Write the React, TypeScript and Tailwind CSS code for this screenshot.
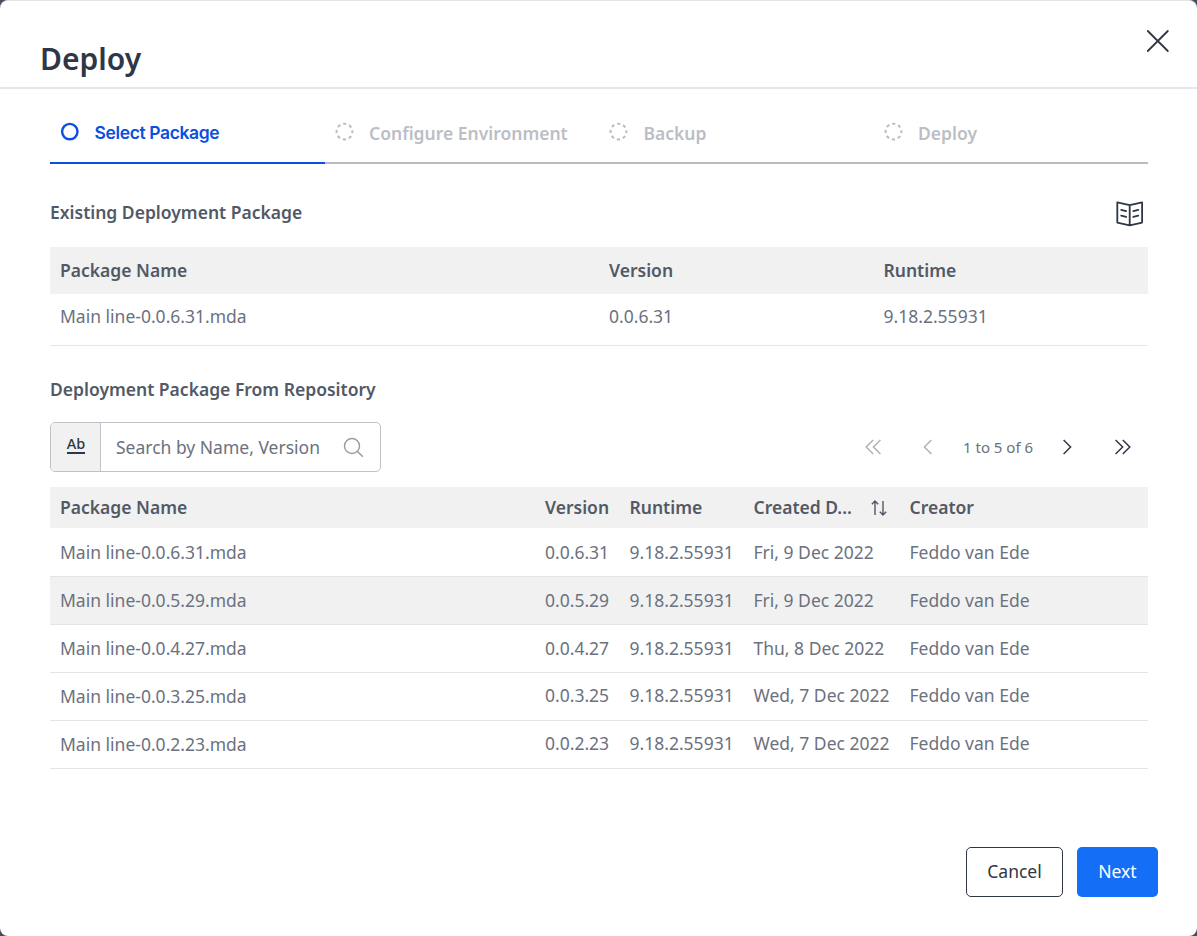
const packages = [
  ["Main line-0.0.6.31.mda", "0.0.6.31", "9.18.2.55931", "Fri, 9 Dec 2022"],
  ["Main line-0.0.5.29.mda", "0.0.5.29", "9.18.2.55931", "Fri, 9 Dec 2022"],
  ["Main line-0.0.4.27.mda", "0.0.4.27", "9.18.2.55931", "Thu, 8 Dec 2022"],
  ["Main line-0.0.3.25.mda", "0.0.3.25", "9.18.2.55931", "Wed, 7 Dec 2022"],
  ["Main line-0.0.2.23.mda", "0.0.2.23", "9.18.2.55931", "Wed, 7 Dec 2022"],
];

const columns = "grid grid-cols-[495px_84.5px_124px_156px_1fr]";

function Step({ label }: { label: string }) {
  return (
    <div className="flex h-[75px] border-b-2 border-[#b7bcc2] pl-2.5 pt-[33px] text-[#bbbec4]">
      <svg className="h-5 w-5 shrink-0" viewBox="0 0 20 20" fill="none" stroke="currentColor">
        <circle cx="9.5" cy="9.6" r="7.9" strokeWidth="2.1" strokeDasharray="3.2 3.005" strokeDashoffset="1.6" />
      </svg>
      <span className="ml-[14.5px] mt-[-1px] text-[17.5px] leading-6 font-semibold whitespace-nowrap">{label}</span>
    </div>
  );
}

function Chevrons({ double, right }: { double?: boolean; right?: boolean }) {
  return (
    <svg
      className={right ? "h-5 w-5 text-[#2f3646]" : "h-5 w-5 rotate-180 text-[#aeb2b9]"}
      viewBox="0 0 20 20"
      fill="none"
      stroke="currentColor"
      strokeWidth="1.5"
    >
      {double ? <path d="M2.6 3l7 7-7 7M9.8 3l7 7-7 7" /> : <path d="M6.6 3l7 7-7 7" />}
    </svg>
  );
}

export default function App() {
  return (
    <div className="h-[936px] w-[1197px] overflow-hidden bg-[#454c5b] font-['Noto_Sans',sans-serif] text-[17.5px] text-[#6c717e]">
      <div className="flex h-full flex-col rounded-[8px] border-t border-[#e3e4e6] bg-white">
        <header className="flex h-[88px] shrink-0 justify-between border-b-2 border-[#e7e7e9] pl-10 pr-[27px]">
          <h1 className="mt-[37px] text-[30px] leading-[42px] font-semibold text-[#2f3646]">Deploy</h1>
          <svg className="mt-[28px] h-6 w-6" viewBox="0 0 24 24" fill="none" stroke="#2f3646" strokeWidth="1.8" strokeLinecap="round">
            <path d="M1.8 2l20 20M21.8 2l-20 20" />
          </svg>
        </header>

        <main className="flex flex-1 flex-col pl-[50px] pr-[49px]">
          <nav className="grid grid-cols-4">
            <div className="flex h-[75px] border-b-2 border-[#0a4fe0] pl-2.5 pt-[33px] text-[#0a4fe0]">
              <svg className="h-5 w-5 shrink-0" viewBox="0 0 20 20" fill="none" stroke="currentColor">
                <circle cx="9.8" cy="9.6" r="7.7" strokeWidth="2.4" />
              </svg>
              <span className="ml-[14.5px] mt-[-1px] font-['Inter',sans-serif] text-[17.5px] leading-6 font-semibold tracking-[-0.38px] whitespace-nowrap">
                Select Package
              </span>
            </div>
            <Step label="Configure Environment" />
            <Step label="Backup" />
            <Step label="Deploy" />
          </nav>

          <section>
            <div className="flex h-[83px] justify-between pr-1">
              <h2 className="mt-[36px] leading-6 font-semibold text-[#525966]">Existing Deployment Package</h2>
              <svg className="mt-[36px] h-7 w-7" viewBox="0 0 28 28" fill="none" stroke="#2f3646" strokeWidth="1.8" strokeLinejoin="round" strokeLinecap="round">
                <path d="M13.7 5.2L1.3 2.3v20.3l12.4 2.7 12.4-2.7V2.3L13.7 5.2zM13.7 5.2v20.1" />
                <path d="M5.2 9.8l5 1.3M5.2 15.6l5 1.3M17.3 11.1l5-1.3M17.3 16.9l5-1.3" />
              </svg>
            </div>
            <div className="grid h-[47px] grid-cols-[2fr_1fr_1fr] items-center bg-[#f1f1f1] font-semibold text-[#525966]">
              <span className="pl-2.5">Package Name</span>
              <span className="pl-2.5">Version</span>
              <span className="pl-2.5">Runtime</span>
            </div>
            <div className="grid h-[52px] grid-cols-[2fr_1fr_1fr] items-center border-b border-[#e7e7e9] pb-[7px]">
              <span className="pl-2.5">Main line-0.0.6.31.mda</span>
              <span className="pl-2.5">0.0.6.31</span>
              <span className="pl-2.5">9.18.2.55931</span>
            </div>
          </section>

          <section>
            <h2 className="mt-[31px] leading-6 font-semibold text-[#525966]">Deployment Package From Repository</h2>
            <div className="mt-[21px] flex h-[50px] items-center justify-between pr-[19px]">
              <div className="flex h-[50px] w-[331px] overflow-hidden rounded-[5px] border border-[#bfc2c8]">
                <div className="flex w-[50px] justify-center border-r border-[#bfc2c8] bg-[#f1f1f1] pl-px">
                  <span className="mt-[11px] h-[20px] border-b-2 border-[#2f3646] text-[14.5px] leading-[19px] font-medium text-[#2f3646]">Ab</span>
                </div>
                <div className="flex flex-1 items-center justify-between pl-[15px] pr-4">
                  <span className="whitespace-nowrap">Search by Name, Version</span>
                  <svg className="h-[21px] w-[21px]" viewBox="0 0 21 21" fill="none" stroke="#9a9ea7" strokeWidth="1.5">
                    <circle cx="9" cy="9" r="7.5" />
                    <path d="M14.4 14.4l5.4 5.4" />
                  </svg>
                </div>
              </div>
              <div className="flex items-center">
                <Chevrons double />
                <div className="ml-[35px]"><Chevrons /></div>
                <span className="ml-[25px] w-[71px] text-[15px] whitespace-nowrap">1 to 5 of 6</span>
                <div className="ml-[23px]"><Chevrons right /></div>
                <div className="ml-9 -mr-1"><Chevrons double right /></div>
              </div>
            </div>

            <div className={`${columns} mt-[15px] h-[41px] items-center bg-[#f1f1f1] font-semibold text-[#525966]`}>
              <span className="pl-2.5">Package Name</span>
              <span>Version</span>
              <span>Runtime</span>
              <span className="flex items-center justify-between pr-[22px] whitespace-nowrap">
                Created D...
                <svg className="h-[18px] w-[18px]" viewBox="0 0 18 18" fill="none" stroke="currentColor" strokeWidth="1.4">
                  <path d="M5 16V2.2M1.8 5.2L5 2l3.2 3.2M13 2v13.8M9.8 12.8L13 16l3.2-3.2" />
                </svg>
              </span>
              <span>Creator</span>
            </div>
            {packages.map(([name, version, runtime, created], i) => {
              const cell = i > 2 ? "pb-0.5" : "";
              return (
                <div
                  key={name}
                  className={`${columns} items-center border-b border-[#e3e4e6] ${i === 0 ? "h-[49px]" : "h-12"} ${i === 1 ? "bg-[#f1f1f1]" : ""}`}
                >
                  <span className="pl-2.5">{name}</span>
                  <span className={cell}>{version}</span>
                  <span className={cell}>{runtime}</span>
                  <span className={cell}>{created}</span>
                  <span className={cell}>Feddo van Ede</span>
                </div>
              );
            })}
          </section>
        </main>

        <footer className="flex shrink-0 justify-end gap-3.5 pr-[39px] pb-[39px]">
          <button className="h-[50px] w-[97px] rounded-[5px] border border-[#2f3646] pb-0.5 text-[#2f3646]">Cancel</button>
          <button className="h-[50px] w-[81px] rounded-[5px] bg-[#146ff6] pb-0.5 text-white">Next</button>
        </footer>
      </div>
    </div>
  );
}
